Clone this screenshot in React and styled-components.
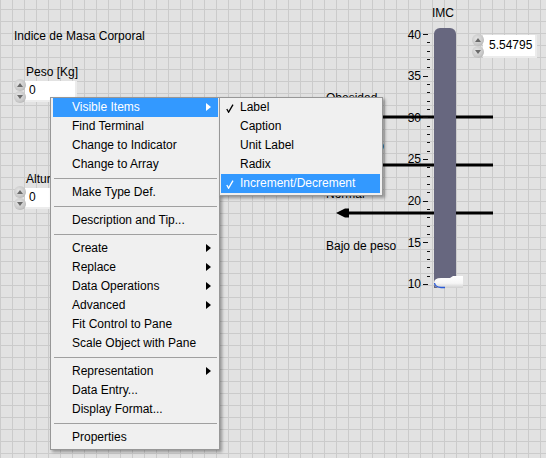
import React from 'react';
import styled, { createGlobalStyle } from 'styled-components';

const GlobalStyle = createGlobalStyle`
  html, body { margin: 0; padding: 0; }
  body {
    font-family: "Liberation Sans", Arial, sans-serif;
    font-size: 12px;
    color: #000;
  }
`;

const menuItems = [
  { label: 'Visible Items', sub: true, active: true },
  { label: 'Find Terminal' },
  { label: 'Change to Indicator' },
  { label: 'Change to Array' },
  'sep',
  { label: 'Make Type Def.' },
  'sep',
  { label: 'Description and Tip...' },
  'sep',
  { label: 'Create', sub: true },
  { label: 'Replace', sub: true },
  { label: 'Data Operations', sub: true },
  { label: 'Advanced', sub: true },
  { label: 'Fit Control to Pane' },
  { label: 'Scale Object with Pane' },
  'sep',
  { label: 'Representation', sub: true },
  { label: 'Data Entry...' },
  { label: 'Display Format...' },
  'sep',
  { label: 'Properties' }
];

const visibleItems = [
  { label: 'Label', checked: true },
  { label: 'Caption' },
  { label: 'Unit Label' },
  { label: 'Radix' },
  { label: 'Increment/Decrement', checked: true, active: true }
];

// limits drawn beside the tank, top to bottom
const zones = [
  { label: 'Obesidad', gap: 0 },
  { label: 'Sobrepeso', gap: 17 },
  { label: 'Normal', gap: 17 },
  { label: 'Bajo de peso', gap: 21, last: true }
];

// scale ticks from 40 down to 10
const ticks = Array.from({ length: 31 }, (_, i) => 40 - i);

const Panel = styled.div`
  position: relative;
  width: 546px;
  height: 458px;
  overflow: hidden;
  background-color: #e2e2e2;
  background-image:
    linear-gradient(to right, #cbcbcb 1px, transparent 1px),
    linear-gradient(to bottom, #cbcbcb 1px, transparent 1px);
  background-size: 12px 12px;
  background-position: 0 9px;
`;

const Node = styled.div`
  position: absolute;
  left: ${p => p.$x}px;
  top: ${p => p.$y}px;
  display: flex;
  flex-direction: column;
  align-items: flex-start;
`;

const Text = styled.span`
  line-height: 14px;
  white-space: nowrap;
  padding-left: ${p => p.$indent || 0}px;
`;

const NumericRow = styled.div`
  display: flex;
  align-items: flex-start;
`;

const Spinner = styled.div`
  display: flex;
  flex-direction: column;
  width: 12px;
  margin-right: -1px;
  z-index: 1;
`;

const SpinButton = styled.div`
  display: flex;
  align-items: center;
  justify-content: center;
  width: 12px;
  height: 12px;
  border-radius: 6px;
  background: radial-gradient(ellipse at 40% 40%, #e6e6e6 0%, #c6c6c6 60%, #9c9c9c 100%);
  &::after {
    content: '';
    border-left: 3px solid transparent;
    border-right: 3px solid transparent;
    ${p => (p.$down ? 'border-top' : 'border-bottom')}: 4px solid #6a6a6a;
  }
`;

const Field = styled.div`
  margin-top: ${p => p.$top}px;
  width: ${p => p.$w}px;
  height: ${p => p.$h}px;
  box-sizing: border-box;
  padding-left: ${p => p.$pad}px;
  line-height: ${p => p.$h - 2}px;
  background: #fff;
  border-right: 2px solid #ececec;
  border-bottom: 2px solid #ececec;
`;

const Limits = styled.div`
  position: absolute;
  left: 326px;
  top: 91px;
  display: flex;
  flex-direction: column;
  align-items: flex-start;
`;

const Zone = styled.div`
  display: flex;
  flex-direction: column;
  align-items: flex-start;
  gap: 7px;
  margin-top: ${p => p.$gap}px;
`;

const ArrowSvg = styled.svg`
  display: block;
  margin-left: 10px;
`;

const Tank = styled.div`
  position: absolute;
  left: 404px;
  top: 6px;
  display: flex;
  flex-direction: column;
`;

const TankTitle = styled.span`
  line-height: 14px;
  padding-left: 28px;
`;

const TankBody = styled.div`
  display: flex;
  align-items: flex-start;
  margin-top: 8px;
`;

const Scale = styled.div`
  width: 26px;
  height: 251px;
  margin-top: 6px;
  display: flex;
  flex-direction: column;
  justify-content: space-between;
`;

const TickRow = styled.div`
  height: 1px;
  display: flex;
  align-items: center;
  justify-content: flex-end;
`;

const TickNumber = styled.span`
  line-height: 14px;
  margin-right: 2px;
`;

const TickLine = styled.div`
  width: ${p => (p.$major ? 5 : 3)}px;
  height: 1px;
  margin-right: ${p => (p.$major ? 2 : 0)}px;
  background: #111;
`;

const Tube = styled.div`
  position: relative;
  width: 22px;
  height: 260px;
  margin-left: 4px;
  background: #67677f;
  border-radius: 6px 6px 0 0;
`;

const Bulb = styled.svg`
  position: absolute;
  left: -1px;
  bottom: -2px;
`;

const Display = styled.div`
  margin-left: 16px;
  margin-top: 6px;
`;

const Menu = styled.div`
  position: absolute;
  left: ${p => p.$x}px;
  top: ${p => p.$y}px;
  width: ${p => p.$w}px;
  box-sizing: border-box;
  display: flex;
  flex-direction: column;
  padding: 0 ${p => p.$padR}px 2px ${p => p.$padL}px;
  background: #f0f0f0;
  border: 1px solid #979797;
  box-shadow: 2px 2px 3px rgba(0, 0, 0, 0.35);
  z-index: ${p => p.$z};
`;

const Item = styled.div`
  position: relative;
  height: 19px;
  line-height: 19px;
  padding-left: 19px;
  white-space: nowrap;
  color: ${p => (p.$active ? '#fff' : '#000')};
  background: ${p => (p.$active ? '#3399ff' : 'transparent')};
`;

const SubArrow = styled.span`
  position: absolute;
  right: 7px;
  top: 5px;
  border-top: 4.5px solid transparent;
  border-bottom: 4.5px solid transparent;
  border-left: 5px solid currentColor;
`;

const Check = styled.svg`
  position: absolute;
  left: 5px;
  top: 6px;
`;

const Separator = styled.div`
  height: 9px;
  display: flex;
  align-items: flex-start;
  &::after {
    content: '';
    margin: 4px 1px 0;
    flex: 1;
    border-top: 1px solid #a0a0a0;
  }
`;

const Numeric = ({ value, w, h, top = 2, pad = 4 }) => (
  <NumericRow>
    <Spinner>
      <SpinButton />
      <SpinButton $down />
    </Spinner>
    <Field $w={w} $h={h} $top={top} $pad={pad}>
      {value}
    </Field>
  </NumericRow>
);

const Control = ({ x, y, label }) => (
  <Node $x={x} $y={y}>
    <Text $indent={12}>{label}</Text>
    <Numeric value="0" w={52} h={21} />
  </Node>
);

const Arrow = () => (
  <ArrowSvg width="158" height="10">
    <polygon points="0,5 9,0.5 13,0.5 13,9.5 9,9.5" fill="#000" />
    <rect x="12" y="3.5" width="145" height="3" fill="#000" />
  </ArrowSvg>
);

const App = () => (
  <Panel>
    <GlobalStyle />
    <Node $x={14} $y={29}>
      <Text>Indice de Masa Corporal</Text>
    </Node>

    <Control x={14} y={65} label="Peso [Kg]" />
    <Control x={14} y={172} label="Altura [m]" />

    <Limits>
      {zones.map(z => (
        <Zone key={z.label} $gap={z.gap}>
          <Text>{z.label}</Text>
          {!z.last && <Arrow />}
        </Zone>
      ))}
    </Limits>

    <Tank>
      <TankTitle>IMC</TankTitle>
      <TankBody>
        <Scale>
          {ticks.map(v => (
            <TickRow key={v}>
              {v % 5 === 0 && <TickNumber>{v}</TickNumber>}
              <TickLine $major={v % 5 === 0} />
            </TickRow>
          ))}
        </Scale>
        <Tube>
          <Bulb width="32" height="16" viewBox="0 0 32 16">
            <defs>
              <linearGradient id="bulbShade" x1="0" y1="0" x2="0" y2="1">
                <stop offset="0" stopColor="#ffffff" />
                <stop offset="0.6" stopColor="#f6f6f6" />
                <stop offset="1" stopColor="#cfcfcf" />
              </linearGradient>
            </defs>
            <path d="M1 9 Q1 4 8 4 L17 4 L20 2 L30 2 L30 14 L8 14 Q1 14 1 9 Z" fill="url(#bulbShade)" />
            <path d="M1.5 9 Q2 13 8 13.5 L12 13.5" fill="none" stroke="#2a5bd7" strokeWidth="1.3" />
          </Bulb>
        </Tube>
        <Display>
          <Numeric value="5.54795" w={54} h={23} top={1} pad={6} />
        </Display>
      </TankBody>
    </Tank>

    <Menu $x={50} $y={97} $w={170} $padL={2} $padR={1} $z={5}>
      {menuItems.map((it, i) =>
        it === 'sep' ? (
          <Separator key={i} />
        ) : (
          <Item key={i} $active={it.active}>
            {it.label}
            {it.sub && <SubArrow />}
          </Item>
        )
      )}
    </Menu>

    <Menu $x={219} $y={97} $w={164} $padL={1} $padR={2} $z={6}>
      {visibleItems.map(it => (
        <Item key={it.label} $active={it.active}>
          {it.checked && (
            <Check width="8" height="9" viewBox="0 0 8 9">
              <path d="M0.8 5 L2.6 8.2 L7 0.6" fill="none" stroke="currentColor" strokeWidth="1.3" />
            </Check>
          )}
          {it.label}
        </Item>
      ))}
    </Menu>
  </Panel>
);

export default App;
